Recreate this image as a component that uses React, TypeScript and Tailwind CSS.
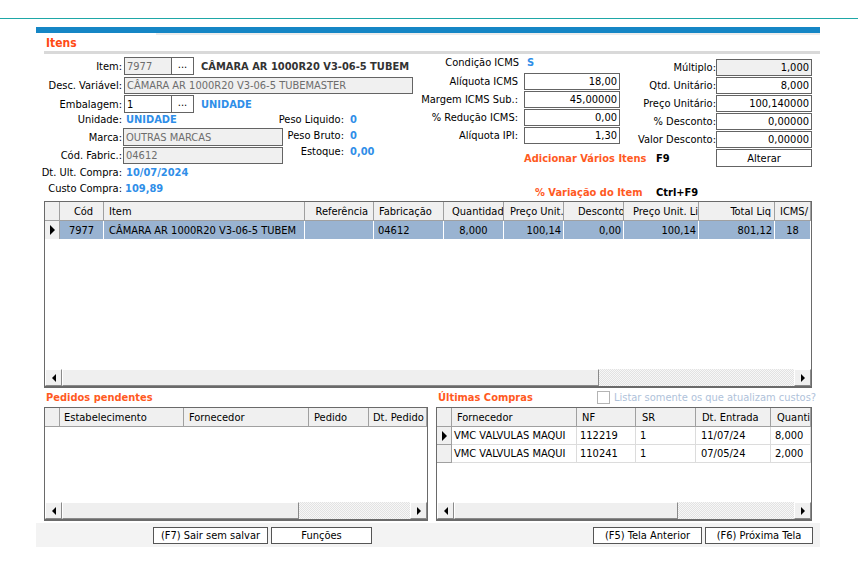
import React from 'react';

const FONT = "font-['DejaVu_Sans_Condensed','DejaVu_Sans','Liberation_Sans',sans-serif]";

type Col = { w: string; label: string; h: string; d?: string };

const mainCols: Col[] = [
  { w: 'w-[15px]', label: '', h: '' },
  { w: 'w-[44px]', label: 'Cód', h: 'justify-center pl-[4px]', d: 'justify-center' },
  { w: 'w-[201px]', label: 'Item', h: 'pl-[5px]', d: 'pl-[5px]' },
  { w: 'w-[69px]', label: 'Referência', h: 'justify-end pr-[5px]', d: 'pl-[5px]' },
  { w: 'w-[70px]', label: 'Fabricação', h: 'pl-[5px]', d: 'pl-[4px]' },
  { w: 'w-[60px]', label: 'Quantidad', h: 'pl-[8px]', d: 'justify-center' },
  { w: 'w-[60px]', label: 'Preço Unit.', h: 'pl-[6px]', d: 'justify-end pr-[2px]' },
  { w: 'w-[60px]', label: 'Desconto', h: 'pl-[14px]', d: 'justify-end pr-[2px]' },
  { w: 'w-[75px]', label: 'Preço Unit. Li', h: 'pl-[9px]', d: 'justify-end pr-[2px]' },
  { w: 'w-[76px]', label: 'Total Liq', h: 'justify-end pr-[3px]', d: 'justify-end pr-[2px]' },
  { w: 'w-[36px]', label: 'ICMS/', h: 'pl-[5px]', d: 'justify-center' },
];

const mainRow = ['', '7977', 'CÂMARA AR 1000R20 V3-06-5 TUBEM', '', '04612', '8,000', '100,14', '0,00', '100,14', '801,12', '18'];

const pedCols: Col[] = [
  { w: 'w-[15px]', label: '', h: '' },
  { w: 'w-[124px]', label: 'Estabelecimento', h: 'pl-[4px]' },
  { w: 'w-[125px]', label: 'Fornecedor', h: 'pl-[5px]' },
  { w: 'w-[60px]', label: 'Pedido', h: 'pl-[5px]' },
  { w: 'w-[58px]', label: 'Dt. Pedido', h: 'pl-[4px]' },
];

const compCols: Col[] = [
  { w: 'w-[15px]', label: '', h: '' },
  { w: 'w-[125px]', label: 'Fornecedor', h: 'pl-[5px]', d: 'pl-[2px]' },
  { w: 'w-[59px]', label: 'NF', h: 'pl-[5px]', d: 'pl-[3px]' },
  { w: 'w-[60px]', label: 'SR', h: 'pl-[6px]', d: 'pl-[4px]' },
  { w: 'w-[75px]', label: 'Dt. Entrada', h: 'pl-[6px]', d: 'pl-[5px]' },
  { w: 'w-[40px]', label: 'Quanti', h: 'pl-[6px]', d: 'pl-[4px]' },
];

const compras = [
  ['', 'VMC VALVULAS MAQUI', '112219', '1', '11/07/24', '8,000'],
  ['', 'VMC VALVULAS MAQUI', '110241', '1', '07/05/24', '2,000'],
];

function Pointer() {
  return <div className="h-0 w-0 border-y-[5px] border-y-transparent border-l-[5px] border-l-black" />;
}

function Arrow({ dir }: { dir: 'left' | 'right' }) {
  return (
    <div className="flex h-full w-[17px] shrink-0 items-center justify-center border border-t-white border-l-white border-r-[#8a8a8a] border-b-[#8a8a8a] bg-[#f0f0f0]">
      {dir === 'left' ? (
        <div className="h-0 w-0 border-y-[4px] border-y-transparent border-r-[4px] border-r-black" />
      ) : (
        <div className="h-0 w-0 border-y-[4px] border-y-transparent border-l-[4px] border-l-black" />
      )}
    </div>
  );
}

function HScroll({ thumb }: { thumb: string }) {
  return (
    <div className="flex h-[17px] shrink-0 bg-[#f0f0f0]">
      <Arrow dir="left" />
      <div className={`${thumb} h-full shrink-0 border border-t-white border-l-white border-r-[#8a8a8a] border-b-[#8a8a8a] bg-[#efefef]`} />
      <div className="h-full flex-1 bg-[repeating-conic-gradient(#e2e2e2_0_25%,#f7f7f7_0_50%)] bg-[length:2px_2px]" />
      <Arrow dir="right" />
    </div>
  );
}

function Header({ cols }: { cols: Col[] }) {
  return (
    <div className="flex h-[19px] shrink-0 border-b border-[#a0a0a0] bg-[#f0f0f0]">
      {cols.map((c, i) => (
        <div
          key={i}
          className={`${c.w} ${c.h} flex h-full shrink-0 items-center overflow-hidden whitespace-nowrap border-r border-[#a0a0a0]`}
        >
          {c.label}
        </div>
      ))}
    </div>
  );
}

function Field({ w, value, gray, dim, right }: { w: string; value: string; gray?: boolean; dim?: boolean; right?: boolean }) {
  return (
    <div
      className={`${w} flex h-full shrink-0 items-center overflow-hidden whitespace-nowrap border border-[#646464] px-[2px] ${gray ? 'bg-[#f0f0f0]' : 'bg-white'} ${dim ? 'text-[#6d6d6d]' : 'text-black'} ${right ? 'justify-end' : ''}`}
    >
      {value}
    </div>
  );
}

function Dots() {
  return (
    <div className="-ml-px flex h-full w-[23px] shrink-0 items-center justify-center border border-[#646464] bg-white pb-[3px]">...</div>
  );
}

function Label({ w, children }: { w: string; children: React.ReactNode }) {
  return <div className={`${w} flex shrink-0 justify-end whitespace-nowrap`}>{children}</div>;
}

function LeftPanel() {
  return (
    <div className="w-[384px] shrink-0 pt-[3px]">
      <div className="flex h-[18px] items-center">
        <Label w="w-[86px]">Item:</Label>
        <div className="ml-[2px] flex h-full">
          <Field w="w-[48px]" value="7977" gray dim />
          <Dots />
        </div>
        <div className="ml-[7px] whitespace-nowrap font-bold text-[#333333]">CÂMARA AR 1000R20 V3-06-5 TUBEM</div>
      </div>
      <div className="mt-[2px] flex h-[17px] items-center">
        <Label w="w-[86px]">Desc. Variável:</Label>
        <div className="ml-[2px] flex h-full">
          <Field w="w-[289px]" value="CÂMARA AR 1000R20 V3-06-5 TUBEMASTER" gray dim />
        </div>
      </div>
      <div className="mt-[1px] flex h-[18px] items-center">
        <Label w="w-[86px]">Embalagem:</Label>
        <div className="ml-[2px] flex h-full">
          <Field w="w-[48px]" value="1" />
          <Dots />
        </div>
        <div className="ml-[7px] font-bold text-[#2f8ee8]">UNIDADE</div>
      </div>
      <div className="flex">
        <div className="w-[247px] shrink-0">
          <div className="flex h-[12px] items-center">
            <Label w="w-[86px]">Unidade:</Label>
            <div className="ml-[4px] font-bold text-[#2f8ee8]">UNIDADE</div>
          </div>
          <div className="mt-[3px] flex h-[18px] items-center">
            <Label w="w-[86px]">Marca:</Label>
            <div className="ml-[1px] flex h-full">
              <Field w="w-[160px]" value="OUTRAS MARCAS" gray dim />
            </div>
          </div>
          <div className="mt-[1px] flex h-[17px] items-center">
            <Label w="w-[86px]">Cód. Fabric.:</Label>
            <div className="ml-[1px] flex h-full">
              <Field w="w-[160px]" value="04612" gray dim />
            </div>
          </div>
          <div className="mt-[1px] flex h-[14px] items-center">
            <Label w="w-[86px]">Dt. Ult. Compra:</Label>
            <div className="ml-[4px] font-bold text-[#2f8ee8]">10/07/2024</div>
          </div>
          <div className="mt-[2px] flex h-[14px] items-center">
            <Label w="w-[86px]">Custo Compra:</Label>
            <div className="ml-[3px] font-bold text-[#2f8ee8]">109,89</div>
          </div>
        </div>
        <div className="-mt-[2px]">
          {[
            ['Peso Liquido:', '0'],
            ['Peso Bruto:', '0'],
            ['Estoque:', '0,00'],
          ].map(([l, v]) => (
            <div key={l} className="flex h-[16px] items-center">
              <Label w="w-[61px]">{l}</Label>
              <div className="ml-[6px] font-bold text-[#2f8ee8]">{v}</div>
            </div>
          ))}
        </div>
      </div>
    </div>
  );
}

function RightPanel() {
  const mid = [
    ['Alíquota ICMS', '18,00'],
    ['Margem ICMS Sub.:', '45,00000'],
    ['% Redução ICMS:', '0,00'],
    ['Alíquota IPI:', '1,30'],
  ];
  const right = [
    ['Múltiplo:', '1,000'],
    ['Qtd. Unitário:', '8,000'],
    ['Preço Unitário:', '100,140000'],
    ['% Desconto:', '0,00000'],
    ['Valor Desconto:', '0,00000'],
  ];
  return (
    <div className="w-[400px] shrink-0">
      <div className="flex">
        <div className="w-[200px] shrink-0">
          <div className="flex h-[16px] items-center">
            <Label w="w-[99px]">Condição ICMS</Label>
            <div className="ml-[8px] font-bold text-[#2f8ee8]">S</div>
          </div>
          <div className="mt-[3px] flex flex-col gap-[1px]">
            {mid.map(([l, v]) => (
              <div key={l} className="flex h-[17px] items-center">
                <Label w="w-[98px]">{l}</Label>
                <div className="ml-[6px] flex h-full">
                  <Field w="w-[96px]" value={v} right />
                </div>
              </div>
            ))}
          </div>
        </div>
        <div className="flex w-[192px] shrink-0 flex-col gap-[1px] pt-[5px]">
          {right.map(([l, v], i) => (
            <div key={l} className="flex h-[17px] items-center">
              <Label w="w-[96px]">{l}</Label>
              <div className="flex h-full">
                <Field w="w-[96px]" value={v} right gray={i === 0} />
              </div>
            </div>
          ))}
        </div>
      </div>
      <div className="mt-[1px] flex h-[18px] items-center">
        <div className="ml-[104px] w-[132px] shrink-0 whitespace-nowrap font-bold text-[#ff5a1f]">Adicionar Vários Itens</div>
        <div className="w-[60px] shrink-0 font-bold">F9</div>
        <div className="flex h-full w-[96px] shrink-0 items-center justify-center border border-[#646464] bg-white">Alterar</div>
      </div>
      <div className="mt-[17px] flex h-[16px] items-center">
        <div className="ml-[115px] w-[121px] shrink-0 whitespace-nowrap font-bold text-[#ff5a1f]">% Variação do Item</div>
        <div className="shrink-0 font-bold">Ctrl+F9</div>
      </div>
    </div>
  );
}

function MainGrid() {
  return (
    <div className="ml-[8px] flex h-[187px] w-[768px] flex-col border border-b-2 border-[#6a6a6a] bg-white">
      <Header cols={mainCols} />
      <div className="flex h-[18px] shrink-0">
        {mainCols.map((c, i) =>
          i === 0 ? (
            <div key={i} className={`${c.w} flex h-full shrink-0 items-center justify-center border-r border-[#a0a0a0] bg-[#f0f0f0]`}>
              <Pointer />
            </div>
          ) : (
            <div
              key={i}
              className={`${c.w} ${c.d} flex h-full shrink-0 items-center overflow-hidden whitespace-nowrap border-r border-white bg-[#99b3d1]`}
            >
              {mainRow[i]}
            </div>
          )
        )}
      </div>
      <div className="flex-1" />
      <HScroll thumb="w-[537px]" />
    </div>
  );
}

function Bottom() {
  return (
    <div className="ml-[8px] flex gap-[8px]">
      <div className="w-[384px] shrink-0">
        <div className="flex h-[19px] items-center pl-[2px] font-bold text-[#ff5a1f]">Pedidos pendentes</div>
        <div className="flex h-[114px] flex-col border border-b-2 border-[#6a6a6a] bg-white">
          <Header cols={pedCols} />
          <div className="flex-1" />
          <HScroll thumb="w-[237px]" />
        </div>
      </div>
      <div className="w-[376px] shrink-0">
        <div className="flex h-[19px] items-center">
          <div className="w-[161px] shrink-0 pl-[2px] font-bold text-[#ff5a1f]">Últimas Compras</div>
          <div className="h-[13px] w-[13px] shrink-0 border border-[#b4b4b4] bg-white" />
          <div className="ml-[4px] whitespace-nowrap text-[#afc2da]">Listar somente os que atualizam custos?</div>
        </div>
        <div className="flex h-[114px] flex-col border border-b-2 border-[#6a6a6a] bg-white">
          <Header cols={compCols} />
          {compras.map((r, ri) => (
            <div key={ri} className="flex h-[18px] shrink-0">
              {compCols.map((c, i) =>
                i === 0 ? (
                  <div key={i} className={`${c.w} flex h-full shrink-0 items-center justify-center border-r border-b border-[#a0a0a0] bg-[#f0f0f0]`}>
                    {ri === 0 && <Pointer />}
                  </div>
                ) : (
                  <div
                    key={i}
                    className={`${c.w} ${c.d} flex h-full shrink-0 items-center overflow-hidden whitespace-nowrap border-r border-b border-[#dcdcdc]`}
                  >
                    {r[i]}
                  </div>
                )
              )}
            </div>
          ))}
          <div className="flex-1" />
          <HScroll thumb="w-[224px]" />
        </div>
      </div>
    </div>
  );
}

function Btn({ w, children }: { w: string; children: React.ReactNode }) {
  return (
    <div className={`${w} flex h-[17px] shrink-0 items-center justify-center whitespace-nowrap border border-[#555555] bg-white`}>{children}</div>
  );
}

export default function App() {
  return (
    <div className={`h-[584px] w-[858px] overflow-hidden bg-white text-[11px] leading-none text-black ${FONT}`}>
      <div className="h-[18px]" />
      <div className="h-[1px] bg-[#1ea7a7]" />
      <div className="ml-[36px] mt-[8px] w-[784px]">
        <div className="h-[6px] bg-[#1586c5]" />
        <div className="ml-[120px] h-[2px] bg-[#ececec]" />
        <div className="flex h-[16px] items-center pl-[10px] text-[12px] font-bold text-[#ff4b14]">Itens</div>
        <div className="ml-[8px] h-[3px] bg-[#d9d9d9]" />
        <div className="flex h-[147px]">
          <LeftPanel />
          <RightPanel />
        </div>
        <MainGrid />
        <Bottom />
        <div className="mt-[2px] flex h-[24px] items-center gap-[3px] bg-[#f3f3f3] pr-[7px]">
          <div className="ml-[117px] flex gap-[3px]">
            <Btn w="w-[115px]">(F7) Sair sem salvar</Btn>
            <Btn w="w-[101px]">Funções</Btn>
          </div>
          <div className="ml-auto flex gap-[3px]">
            <Btn w="w-[109px]">(F5) Tela Anterior</Btn>
            <Btn w="w-[108px]">(F6) Próxima Tela</Btn>
          </div>
        </div>
      </div>
    </div>
  );
}
